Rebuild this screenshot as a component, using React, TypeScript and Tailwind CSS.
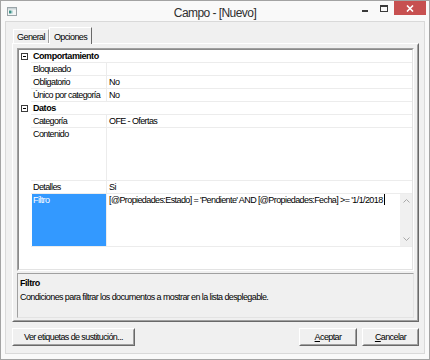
import React from "react";

function Box() {
  return (
    <div className="w-[7px] h-[7px] border border-[#3c3c3c] bg-white flex items-center justify-center">
      <div className="w-[3px] h-px bg-black" />
    </div>
  );
}

function Category({ label }: { label: string }) {
  return (
    <div className="flex h-[13px]">
      <div className="w-[12px] shrink-0 flex items-center pl-[2px]">
        <Box />
      </div>
      <div className="flex-1 border-b border-[#ececec] pl-[2px] leading-[12px] font-bold tracking-[-0.45px]">
        {label}
      </div>
    </div>
  );
}

function Prop({ label, value, tall }: { label: string; value?: string; tall?: boolean }) {
  return (
    <div className={tall ? "flex h-[53px]" : "flex h-[13px]"}>
      <div className="w-[12px] shrink-0" />
      <div className="w-[75px] shrink-0 border-b border-[#ececec] pl-[2px] leading-[12px] whitespace-nowrap">
        {label}
      </div>
      <div className="w-px shrink-0 bg-[#ececec]" />
      <div className="flex-1 border-b border-[#ececec] pl-[2px] leading-[12px]">{value}</div>
    </div>
  );
}

function Chevron({ down }: { down?: boolean }) {
  return (
    <svg width="7" height="4" viewBox="0 0 7 4">
      <polyline
        points={down ? "0.5,0.5 3.5,3.5 6.5,0.5" : "0.5,3.5 3.5,0.5 6.5,3.5"}
        fill="none"
        stroke="#a8a8a8"
        strokeWidth="1"
      />
    </svg>
  );
}

function Button({ children, className }: { children: React.ReactNode; className: string }) {
  return (
    <div
      className={
        "h-[18px] border border-t-white border-l-white border-r-[#696969] border-b-[#696969] " + className
      }
    >
      <div className="h-full border border-t-[#f0f0f0] border-l-[#f0f0f0] border-r-[#a0a0a0] border-b-[#a0a0a0] bg-[#f0f0f0] flex items-center justify-center leading-[12px] whitespace-nowrap">
        {children}
      </div>
    </div>
  );
}

export default function App() {
  return (
    <div className="w-[430px] h-[360px] bg-[#f9f9f9] border border-[#a3a3a3] flex flex-col overflow-hidden text-[9px] tracking-[-0.6px] text-black font-['Liberation_Sans',Arial,sans-serif]">
      {/* title bar */}
      <div className="h-[20px] shrink-0 flex">
        <div className="w-[74px] pl-[6px] pt-[6px]">
          <svg width="10" height="9" viewBox="0 0 10 9">
            <rect x="0.5" y="0.5" width="9" height="8" fill="#f4f6f6" stroke="#9aa4a8" />
            <rect x="1" y="1" width="8" height="1.5" fill="#c9d3d6" />
            <rect x="2" y="3.5" width="2" height="3" fill="#3f8f86" />
            <rect x="4" y="3.5" width="1.5" height="3" fill="#8fc3c0" />
          </svg>
        </div>
        <div className="flex-1 text-center text-[12px] tracking-[-0.55px] leading-[20px] text-[#2f2f2f] pt-[2px]">
          Campo - [Nuevo]
        </div>
        <div className="w-[74px] flex items-start pl-[2px] pr-[3px]">
          <div className="w-[15px] h-[15px] flex items-start justify-center pt-[9px]">
            <div className="w-[6px] h-[2px] bg-[#3a3a3a]" />
          </div>
          <div className="w-[2px]" />
          <div className="w-[20px] h-[15px] flex justify-center pt-[4px]">
            <div className="w-[8px] h-[7px] border border-t-2 border-[#3a3a3a]" />
          </div>
          <div className="w-[32px] h-[14px] bg-[#c75050] flex items-center justify-center">
            <svg width="8" height="7" viewBox="0 0 8 7">
              <path d="M1 0.5 L7 6.5 M7 0.5 L1 6.5" stroke="#ffffff" strokeWidth="1.6" />
            </svg>
          </div>
        </div>
      </div>

      {/* client area */}
      <div className="mx-[4px] h-[333px] shrink-0 border border-[#d9d9d9] bg-[#f0f0f0] flex flex-col pl-[6px] pr-[5px] pt-[5px]">
        {/* tabs */}
        <div className="h-[16px] flex items-end relative z-10">
          <div className="ml-px w-[36px] h-[14px] border-t border-l border-white border-r border-r-[#a0a0a0] flex items-center justify-center leading-[12px]">
            General
          </div>
          <div className="w-[43px] h-[17px] -mb-px border-t border-l border-white border-r border-r-[#696969] bg-[#f0f0f0] flex items-start justify-center pt-[3px] leading-[12px]">
            Opciones
          </div>
        </div>

        {/* tab panel */}
        <div className="h-[279px] border border-t-white border-l-white border-r-[#696969] border-b-[#696969]">
          <div className="h-full border border-t-[#f0f0f0] border-l-[#f0f0f0] border-r-[#a0a0a0] border-b-[#a0a0a0] px-[3px] pt-[3px] pb-[2px] flex flex-col gap-[2px]">
            {/* property grid */}
            <div className="h-[223px] shrink-0 border border-t-[#a0a0a0] border-l-[#a0a0a0] border-r-white border-b-white">
              <div className="h-full bg-white border border-t-[#8a8a8a] border-l-[#8a8a8a] border-r-[#e3e3e3] border-b-[#e3e3e3] flex flex-col">
                <Category label="Comportamiento" />
                <Prop label="Bloqueado" />
                <Prop label="Obligatorio" value="No" />
                <Prop label="Único por categoría" value="No" />
                <Category label="Datos" />
                <Prop label="Categoría" value="OFE - Ofertas" />
                <Prop label="Contenido" tall />
                <Prop label="Detalles" value="Si" />
                {/* selected row */}
                <div className="flex h-[53px]">
                  <div className="w-[12px] shrink-0" />
                  <div className="w-[75px] shrink-0 border-b border-[#ececec] flex">
                    <div className="ml-px flex-1 bg-[#3399ff] text-white pl-px leading-[12px]">Filtro</div>
                  </div>
                  <div className="w-px shrink-0 bg-[#ececec]" />
                  <div className="flex-1 border-b border-[#ececec] flex">
                    <div className="flex-1 pl-[2px] leading-[12px] whitespace-nowrap flex items-start">
                      <span>[@Propiedades:Estado] = 'Pendiente' AND [@Propiedades:Fecha] &gt;= '1/1/2018</span>
                      <span className="w-px h-[11px] bg-black ml-px" />
                    </div>
                    <div className="w-[12px] shrink-0 bg-[#f0f0f0] flex flex-col items-center justify-between py-[5px]">
                      <Chevron />
                      <Chevron down />
                    </div>
                  </div>
                </div>
              </div>
            </div>

            {/* description */}
            <div className="h-[45px] shrink-0 border border-t-[#a0a0a0] border-l-[#a0a0a0] border-r-[#e3e3e3] border-b-[#e3e3e3] pl-[2px] pt-[3px] flex flex-col gap-[2px]">
              <div className="font-bold leading-[12px] tracking-[-0.45px]">Filtro</div>
              <div className="leading-[12px]">
                Condiciones para filtrar los documentos a mostrar en la lista desplegable.
              </div>
            </div>
          </div>
        </div>

        {/* buttons */}
        <div className="mt-[6px] flex justify-between">
          <Button className="w-[123px]">Ver etiquetas de sustitución...</Button>
          <div className="flex gap-[5px]">
            <Button className="w-[58px]">
              <span>
                <span className="underline">A</span>ceptar
              </span>
            </Button>
            <Button className="w-[57px]">
              <span>
                <span className="underline">C</span>ancelar
              </span>
            </Button>
          </div>
        </div>
      </div>
    </div>
  );
}
